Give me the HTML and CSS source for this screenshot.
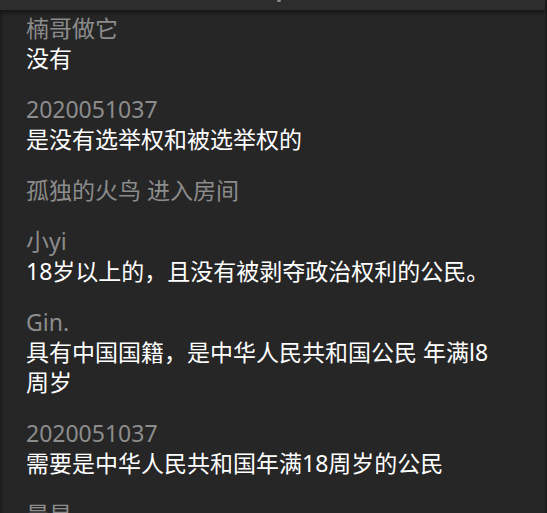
FILE: index.html
```html
<!DOCTYPE html>
<html lang="zh-CN">
<head>
  <meta charset="UTF-8" />
  <title>聊天室</title>
  <link rel="stylesheet" href="styles.css">
</head>
<body>
  <div class="app">
    <div class="topbar">
      <div class="grip"></div>
    </div>

    <div class="chat">
      <div class="msg">
        <div class="name">楠哥做它</div>
        <div class="text">没有</div>
      </div>
      <div class="msg">
        <div class="name">2020051037</div>
        <div class="text">是没有选举权和被选举权的</div>
      </div>
      <div class="msg">
        <div class="name">孤独的火鸟 进入房间</div>
      </div>
      <div class="msg">
        <div class="name">小yi</div>
        <div class="text">18岁以上的，且没有被剥夺政治权利的公民。</div>
      </div>
      <div class="msg">
        <div class="name">Gin.</div>
        <div class="text">具有中国国籍，是中华人民共和国公民 年满l8周岁</div>
      </div>
      <div class="msg">
        <div class="name">2020051037</div>
        <div class="text">需要是中华人民共和国年满18周岁的公民</div>
      </div>
      <div class="msg">
        <div class="name">晨星</div>
        <div class="text">嗯</div>
      </div>
    </div>
  </div>
</body>
</html>
```

FILE: styles.css
```css
body {
  margin: 0;
  overflow: hidden;
  background-color: #1d1d1d;
  font-family: 'Noto Sans', 'Noto Sans CJK SC', sans-serif;
}

.app {
  display: flex;
  flex-direction: column;
  height: 513px;
  border-right: 2px solid #1e1e1e;
}

.topbar {
  position: relative;
  z-index: 2;
  height: 10px;
  flex-shrink: 0;
  background-color: #2d2d2d;
  box-shadow: 0 2px 5px rgba(0,0,0,0.55);
  display: flex;
  justify-content: center;
  align-items: flex-start;
}

.grip {
  width: 4px;
  height: 2px;
  margin-left: 12px;
  background: #8a8a8a;
  border-radius: 1px;
}

.chat {
  flex: 1;
  overflow: hidden;
  background-color: #262626;
  border-left: 3px solid #1e1e1e;
  padding: 3px 45px 0 23px;
  display: flex;
  flex-direction: column;
  gap: 21px;
  font-size: 23px;
  line-height: 30px;
}

.name {
  color: #8c8c8c;
}

.text {
  color: #fff;
}
```
